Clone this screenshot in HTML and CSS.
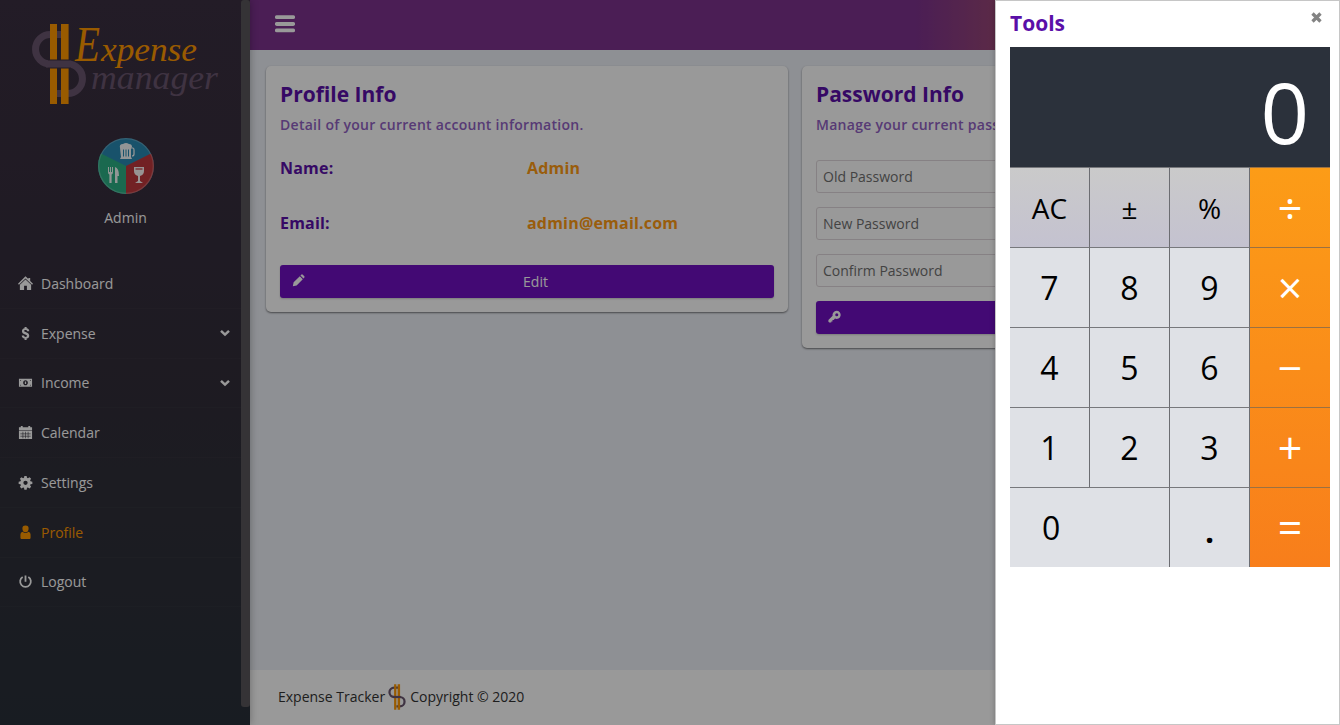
FILE: index.html
```html
<!DOCTYPE html>
<html lang="en">
<head>
<meta charset="utf-8">
<title>Expense Manager</title>
<link rel="stylesheet" href="styles.css">
</head>
<body>
<div class="app">
  <aside class="sidebar">
    <svg class="logo" width="190" height="84" viewBox="30 22 190 84">
      <path class="mark-s" d="M64 34.5H50.3a14.75 14.75 0 0 0 0 29.5H67.7a14.75 14.75 0 0 1 0 29.5H57"/>
      <path class="mark-bar" d="M50 24h7v80h-7zM61 24h7.600v80H61z"/>
      <path class="mark-gap" d="M48 64H71"/>
      <path class="mark-s" d="M46 64H71"/>
      <text class="script cap" x="75" y="61" textLength="25" lengthAdjust="spacingAndGlyphs">E</text>
      <text class="script" x="101" y="61" textLength="96" lengthAdjust="spacingAndGlyphs">xpense</text>
      <text class="script muted" x="91" y="89" textLength="127" lengthAdjust="spacingAndGlyphs">manager</text>
    </svg>
    <svg class="avatar" width="56" height="56" viewBox="0 0 56 56">
      <circle cx="28" cy="28" r="28" fill="#2989b2"/>
      <path d="M28 28V56A28 28 0 0 1 3 15.500z" fill="#2cb084"/>
      <path d="M28 28V56A28 28 0 0 0 53 15.500z" fill="#bf383c"/>
      <circle cx="28" cy="28" r="27.300" fill="none" stroke="#fff" stroke-opacity=".22" stroke-width="1.200"/>
      <g fill="#fff" fill-opacity=".95">
        <path d="M22 10q-1-4 3-4 3-2 6 0 3 0 3 3l-1 1v9l1 2H22l1-2z"/>
        <path d="M33 10h2q1 0 1 2v4q0 2-2 2" fill="none" stroke="#fff" stroke-width="1.200"/>
        <path d="M25.500 11.500v7M28 11.500v7M30.500 11.500v7" stroke="#2989b2" stroke-width="1"/>
        <path d="M10 29h1v5h1v-5h1v5h1v-5h1v5q0 2-1.400 2.500V45h-2.200v-8.500Q10 36 10 34zM17 45V29q4 1 4 9h-1.500v7z"/>
        <path d="M36 29h10v4q0 4-4 5v5l3 2h-8l3-2v-5q-4-1-4-5z"/>
      </g>
      <path d="M37.500 31h7" stroke="#bf383c" stroke-width="1.200"/>
    </svg>
    <div class="username">Admin</div>
    <nav class="menu">
      <a><svg viewBox="0 0 16 16"><path d="M8 .3 0 8.200l1 1L8 2.600l7 6.600 1-1-3-3V2h-2v1.200zM8 3.700 2 9.400V15h4.500v-4.500h3V15H14V9.400z"/></svg><span>Dashboard</span></a>
      <a><svg viewBox="0 0 16 16"><path d="M7 1h2.200v1.500C11 2.800 12 4 12 5.500H9.600c0-.8-.6-1.200-1.500-1.200-1 0-1.500.4-1.500 1.100C6.600 7 12 6.300 12 10.300c0 1.700-1.100 2.800-2.800 3.100V15H7v-1.600c-1.900-.3-3-1.500-3-3.300h2.400c0 1 .7 1.500 1.700 1.500s1.500-.4 1.500-1.100C9.600 8.700 4.200 9.200 4.200 5.600 4.200 3.900 5.300 2.800 7 2.500z"/></svg><span>Expense</span><svg class="chev" viewBox="0 0 10 8"><path d="M1 1.800l4 3.800 4-3.800"/></svg></a>
      <a><svg viewBox="0 0 16 16"><path fill-rule="evenodd" d="M1 4h14v8.500H1zM8 5.500c-1.500 0-2.500 1.200-2.500 2.700S6.500 11 8 11s2.500-1.300 2.500-2.800S9.500 5.500 8 5.500zM2.200 5.200v1.300l1.300-1.300zm11.600 0h-1.300l1.300 1.300zM2.200 11.300h1.300L2.200 10zm11.600 0V10l-1.300 1.300zM7.300 7h1.400v2.500H7.300z"/></svg><span>Income</span><svg class="chev" viewBox="0 0 10 8"><path d="M1 1.800l4 3.800 4-3.800"/></svg></a>
      <a><svg viewBox="0 0 16 16"><path d="M1 2.500h2V1h2v1.500h6V1h2v1.500h2v3H1zM1 6.200h14V15H1z"/><path d="M2.500 9.400h11M2.500 12h11M5.200 7.200v7M8 7.200v7M10.800 7.200v7" stroke="#2f2c38" stroke-width=".6"/></svg><span>Calendar</span></a>
      <a><svg viewBox="0 0 16 16"><path fill-rule="evenodd" d="M6.800 1h2.400l.4 2 1 .4 1.700-1.100L14 4l-1.100 1.700.4 1 2 .4v2.400l-2 .4-.4 1L14 12.600l-1.700 1.700-1.700-1.100-1 .4-.4 2H6.800l-.4-2-1-.4-1.700 1.100L2 12.600l1.100-1.700-.4-1-2-.4V7.100l2-.4.4-1L2 4l1.700-1.700 1.700 1.100 1-.4zM8 6a2.300 2.300 0 1 0 0 4.600A2.300 2.300 0 0 0 8 6z"/></svg><span>Settings</span></a>
      <a class="active"><svg viewBox="0 0 16 16"><path d="M8 .6a3.300 3.300 0 0 0-3.300 3.500c0 1 .3 2 .9 2.700Q8 8.500 10.400 6.800c.6-.7.9-1.700.9-2.700A3.300 3.300 0 0 0 8 .6zM4.800 7.200Q2.600 8 2.600 10v4.200l.8.8h9.200l.8-.8V10q0-2-2.200-2.800Q8 9.800 4.800 7.200z"/></svg><span>Profile</span></a>
      <a><svg viewBox="0 0 16 16"><path d="M5 3.200a5.700 5.700 0 1 0 6 0M8 1.500v6.700" fill="none" stroke="currentColor" stroke-width="1.900"/></svg><span>Logout</span></a>
    </nav>
    <div class="scroll-thumb"></div>
  </aside>

  <div class="page">
    <header class="topbar">
      <svg width="20" height="18" viewBox="0 0 20 18"><path d="M1.800 2.200h16.400M1.800 9h16.400M1.800 15.400h16.400" stroke="#fff" stroke-width="3.800" stroke-linecap="round"/></svg>
    </header>
    <main class="content">
      <section class="card">
        <h2>Profile Info</h2>
        <p class="sub">Detail of your current account information.</p>
        <dl class="facts">
          <dt>Name:</dt><dd>Admin</dd>
          <dt>Email:</dt><dd>admin@email.com</dd>
        </dl>
        <div class="btn">
          <svg viewBox="0 0 16 16"><path d="M1 15l1-4.700L9.600 2.700l3.700 3.700-7.600 7.600zM10.400 1.900l1.300-1.200q.8-.6 1.600.1l1.900 1.900q.6.800 0 1.600l-1.100 1.300z"/></svg>
          <span>Edit</span>
        </div>
      </section>
      <section class="card">
        <h2>Password Info</h2>
        <p class="sub">Manage your current password.</p>
        <div class="form">
          <div class="field">Old Password</div>
          <div class="field">New Password</div>
          <div class="field">Confirm Password</div>
          <div class="btn">
            <svg viewBox="0 0 16 16"><path fill-rule="evenodd" d="M10.500 1a5 5 0 0 0-4.800 6.200L.5 12.400V14.500l1 1H4V14h1.500v-1.700H7l1.600-1.700A5 5 0 1 0 10.500 1zm.3 3a1.900 1.900 0 1 1 0 3.800 1.900 1.900 0 0 1 0-3.800z"/></svg>
          </div>
        </div>
      </section>
    </main>
    <footer class="footer">
      <span>Expense Tracker</span>
      <svg width="18" height="26" viewBox="31 23 56 82" preserveAspectRatio="none">
        <path class="mark-s" d="M64 34.500H50.300a14.750 14.750 0 0 0 0 29.500H67.700a14.750 14.750 0 0 1 0 29.500H57"/>
        <path class="mark-bar" d="M50 24h7v80h-7zM61 24h7.600v80H61z"/>
        <path class="mark-s" d="M46 64H71"/>
      </svg>
      <span>Copyright © 2020</span>
    </footer>
  </div>
  <div class="overlay"></div>

  <aside class="tools">
    <div class="tools-head">
      <h2>Tools</h2>
      <svg width="11" height="11" viewBox="0 0 11 11"><path d="M1.500 1.500l8 8M9.500 1.500l-8 8" stroke="#838383" stroke-width="3.300"/></svg>
    </div>
    <div class="calc">
      <div class="display">0</div>
      <div class="keys">
        <div class="key fn">AC</div><div class="key fn">±</div><div class="key fn">%</div>
        <div class="key">7</div><div class="key">8</div><div class="key">9</div>
        <div class="key">4</div><div class="key">5</div><div class="key">6</div>
        <div class="key">1</div><div class="key">2</div><div class="key">3</div>
        <div class="key zero">0</div><div class="key dot">.</div>
      </div>
      <div class="ops">
        <div class="op">÷</div><div class="op">×</div><div class="op">−</div><div class="op">+</div><div class="op">=</div>
      </div>
    </div>
  </aside>
</div>
</body>
</html>
```
FILE: styles.css
```css
* { box-sizing: border-box; }
body { margin: 0; font-family: "Open Sans", sans-serif; font-size: 14px; color: #333; }
h2, p, dl, dd { margin: 0; }
.app { position: relative; display: flex; width: 1340px; height: 725px; overflow: hidden; }

.sidebar { position: relative; z-index: 1; width: 250px; display: flex; flex-direction: column; padding-top: 22px; color: #fff; background: linear-gradient(#3b2f41, #322d3a 50%, #2f303a 72%, #292f39); box-shadow: 0 0 8px rgba(0,0,0,.3); }
.logo { margin-left: 30px; overflow: visible; }
.mark-s { fill: none; stroke: #6a566e; stroke-width: 7; }
.mark-bar { fill: #ff9800; }
.mark-gap { fill: none; stroke: #3a2f40; stroke-width: 9; }
.script { font-family: "Liberation Serif", serif; font-style: italic; font-size: 33px; fill: #ff9800; }
.script.cap { font-size: 50px; }
.script.muted { fill: #6a566e; }
.avatar { margin: 32px 0 0 98px; }
.username { width: 251px; margin-top: 14px; height: 20px; line-height: 20px; text-align: center; }
.menu { margin-top: 31px; }
.menu a { display: flex; align-items: center; height: 49.750px; padding-left: 18px; border-bottom: 1px solid rgba(255,255,255,.018); }
.menu svg { width: 15px; height: 15px; fill: currentColor; }
.menu span { margin-left: 8px; }
.menu .chev { width: 10px; height: 8px; margin-left: auto; margin-right: 20px; fill: none; stroke: #fff; stroke-width: 2.500; }
.menu .active { color: #ff9800; }
.scroll-thumb { position: absolute; top: 0; right: 0; width: 9px; height: 707px; border-radius: 3px; background: #59565a; }

.page { flex: 1; display: flex; flex-direction: column; background: #edf0f7; }
.topbar { height: 50px; padding: 15px 25px; background: linear-gradient(90deg, #7d328e 0 61%, #9a4875 69%, #b5533e 80%, #f9871f); }
.topbar svg { display: block; }
.content { flex: 1; display: grid; grid-template-columns: 522px 522px; gap: 14px; align-items: start; padding: 16px; }
.card { padding: 14px; background: #fff; border-radius: 5px; box-shadow: 0 1px 2px rgba(0,0,0,.5); }
h2 { height: 28px; line-height: 28px; font-size: 21px; font-weight: 700; color: #5a0fa8; }
.sub { height: 20px; margin-top: 7px; line-height: 20px; font-weight: 600; letter-spacing: .28px; color: #9162c4; }
.facts { display: grid; grid-template-columns: 50% 50%; grid-auto-rows: 55px; padding-top: 6px; line-height: 54px; font-size: 16px; font-weight: 700; letter-spacing: .2px; }
dt { color: #5a0fa8; }
dd { color: #ff9b14; }
.btn { display: flex; align-items: center; height: 33px; padding: 0 8px 0 12px; color: #fff; background: #700fc2; border-radius: 3px; box-shadow: 0 1px 2px rgba(0,0,0,.2); }
.card .facts + .btn { margin-top: 14px; }
.btn svg { width: 13px; height: 13px; margin-bottom: 2px; fill: #fff; }
.btn span { flex: 1; text-align: center; }
.form { display: grid; gap: 14px; padding-top: 25px; }
.field { height: 33px; padding: 0 6px; line-height: 31px; border: 1px solid #dfd8dc; border-radius: 3px; color: #707070; }
.footer { display: flex; align-items: center; height: 55px; padding: 0 28px 2px; background: #fff; }
.footer svg { margin: 0 4px 0 3px; }

.overlay { position: absolute; inset: 0; z-index: 2; background: rgba(0,0,0,.4); }

.tools { position: absolute; top: 0; right: 0; z-index: 3; width: 345px; height: 725px; padding: 8px 9px 0 14px; background: #fff; border: 1px solid #c6c6c6; box-shadow: 0 0 5px rgba(0,0,0,.25); }
.tools-head { display: flex; justify-content: space-between; height: 38px; padding-right: 8px; }
.tools-head svg { margin-top: 3px; }
.calc { display: grid; grid-template-columns: 240px 80px; width: 320px; }
.display { grid-column: span 2; height: 120px; padding-right: 21px; line-height: 128px; font-size: 85px; text-align: right; color: #fff; background: #2b313b; }
.keys { display: grid; grid-template-columns: repeat(3, 80px); grid-auto-rows: 80px; color: #000; }
.key, .op { border-top: 1px solid #77787c; text-align: center; }
.key { line-height: 79px; font-size: 32px; background: #dfe1e6; border-right: 1px solid #6c6d72; }
.key.fn { line-height: 81px; font-size: 28px; background: linear-gradient(#cacaca, #c4c2d0); }
.key.zero { grid-column: span 2; padding-left: 32px; text-align: left; }
.key.dot { font-weight: 700; line-height: 86px; }
.ops { display: grid; grid-auto-rows: 80px; color: #fff; background: linear-gradient(#fc9c17, #f87e1b); }
.op { height: 80px; line-height: 80px; font-size: 43px; border-top-color: #9b7142; }
```
